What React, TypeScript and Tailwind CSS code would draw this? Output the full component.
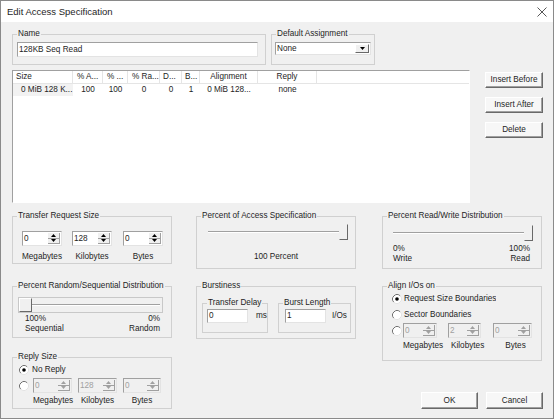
import React from 'react'

const Arrow = ({ down, disabled }: { down?: boolean; disabled?: boolean }) => (
  <svg width="5" height="3" viewBox="0 0 5 3">
    <path d={down ? 'M0 0 L5 0 L2.5 3 Z' : 'M0 3 L5 3 L2.5 0 Z'} fill={disabled ? '#a0a0a0' : '#000'} />
  </svg>
)

const Radio = ({ checked }: { checked?: boolean }) => (
  <svg width="10" height="10" viewBox="0 0 10 10" className="shrink-0">
    <circle cx="5" cy="5" r="4.5" fill="#fff" />
    <path d="M1.82 8.18 A4.5 4.5 0 0 1 8.18 1.82" fill="none" stroke="#707070" strokeWidth="1" />
    <path d="M8.18 1.82 A4.5 4.5 0 0 1 1.82 8.18" fill="none" stroke="#e3e3e3" strokeWidth="1" />
    {checked && <circle cx="5" cy="5" r="1.8" fill="#000" />}
  </svg>
)

const Group = ({ label, className, children }: { label: string; className: string; children?: React.ReactNode }) => (
  <fieldset className={`border border-[#d0d0d0] ${className}`}>
    <legend className="ml-[4px] px-[1px] leading-[10px]">{label}</legend>
    {children}
  </fieldset>
)

const Spin = ({ value, w, disabled }: { value: string; w: string; disabled?: boolean }) => (
  <div
    className={`flex h-[15px] ${w} border border-t-[#a0a0a0] border-l-[#a0a0a0] border-r-[#e3e3e3] border-b-[#e3e3e3] ${
      disabled ? 'bg-[#f0f0f0] text-[#a0a0a0]' : 'bg-white'
    }`}
  >
    <span className="flex-1 pl-[1px] leading-[13px]">{value}</span>
    <div className="my-[1px] mr-[1px] flex w-[12px] flex-col">
      <div className="flex flex-1 items-center justify-center border-r border-b border-[#a0a0a0] bg-[#f0f0f0]">
        <Arrow disabled={disabled} />
      </div>
      <div className="flex flex-1 items-center justify-center border-r border-b border-[#a0a0a0] bg-[#f0f0f0]">
        <Arrow down disabled={disabled} />
      </div>
    </div>
  </div>
)

const Btn = ({ label, w, h }: { label: string; w: string; h: string }) => (
  <div
    className={`flex ${w} ${h} items-center justify-center border border-t-white border-l-white border-r-[#696969] border-b-[#696969] bg-[#f7f7f7] shadow-[inset_-1px_-1px_0_#a0a0a0]`}
  >
    {label}
  </div>
)

const Track = ({ w }: { w: string }) => (
  <div className={`h-[2px] ${w} border-t border-t-[#a0a0a0] border-b border-b-white`} />
)

const Thumb = () => (
  <div className="-ml-[1px] h-[16px] w-[9px] border border-t-[#f0f0f0] border-l-[#f0f0f0] border-r-[#696969] border-b-[#696969]" />
)

const columns = [
  { head: 'Size', cell: '0 MiB 128 K...', w: 'w-[60px]', hAlign: 'pl-[3px]', cAlign: 'pl-[8px] bg-[#f2f2f2]' },
  { head: '% A...', cell: '100', w: 'w-[30px]', hAlign: 'pl-[4px]', cAlign: 'text-center' },
  { head: '% ...', cell: '100', w: 'w-[25px]', hAlign: 'pl-[4px]', cAlign: 'text-center' },
  { head: '% Ra...', cell: '0', w: 'w-[32px]', hAlign: 'pl-[4px]', cAlign: 'text-center' },
  { head: 'D...', cell: '0', w: 'w-[22px]', hAlign: 'pl-[3px]', cAlign: 'text-center' },
  { head: 'B...', cell: '1', w: 'w-[18px]', hAlign: 'pl-[3px]', cAlign: 'text-center' },
  { head: 'Alignment', cell: '0 MiB 128...', w: 'w-[58px]', hAlign: 'text-center', cAlign: 'text-center' },
  { head: 'Reply', cell: 'none', w: 'w-[59px]', hAlign: 'text-center', cAlign: 'text-center' }
]

export default function App() {
  return (
    <div className="flex h-[419px] w-[554px] flex-col overflow-hidden border border-[#8a8a8a] bg-[#f0f0f0] font-['Liberation_Sans',Arial,sans-serif] text-[8.2px] leading-[10px] text-[#1e1e1e]">
      {/* Title bar */}
      <div className="flex h-[21px] shrink-0 items-center justify-between bg-white pr-[6px] pl-[6px] text-[9.5px]">
        <span>Edit Access Specification</span>
        <svg width="10" height="10" viewBox="0 0 10 10">
          <path d="M0.5 0.5 L9.5 9.5 M9.5 0.5 L0.5 9.5" stroke="#444" strokeWidth="0.9" />
        </svg>
      </div>

      <div className="flex flex-1 flex-col pl-[11px]">
        {/* Name / Default Assignment */}
        <div className="mt-[7px] flex">
          <Group label="Name" className="h-[36px] w-[254px]">
            <div className="mt-[3px] ml-[4px] h-[15px] w-[241px] border border-t-[#a0a0a0] border-l-[#a0a0a0] border-r-[#e3e3e3] border-b-[#e3e3e3] bg-white pl-[1px] leading-[13px]">
              128KB Seq Read
            </div>
          </Group>
          <Group label="Default Assignment" className="ml-[5px] h-[36px] w-[104px]">
            <div className="mt-[3px] ml-[3px] flex h-[13px] w-[96px] border border-t-[#a0a0a0] border-l-[#a0a0a0] border-r-[#e3e3e3] border-b-[#e3e3e3] bg-white">
              <span className="flex-1 pl-[1px] leading-[11px]">None</span>
              <div className="my-[1px] mr-[1px] flex w-[14px] items-center justify-center border border-t-white border-l-white border-r-[#696969] border-b-[#696969] bg-[#f0f0f0]">
                <Arrow down />
              </div>
            </div>
          </Group>
        </div>

        {/* List + side buttons */}
        <div className="mt-[5px] flex">
          <div className="h-[133px] w-[458px] border border-t-[#a0a0a0] border-l-[#a0a0a0] border-r-white border-b-white bg-white">
            <div className="flex h-[13px] border-b border-[#e5e5e5]">
              {columns.map((c) => (
                <div key={c.head} className={`${c.w} ${c.hAlign} shrink-0 border-r border-[#e5e5e5] leading-[12px] whitespace-nowrap`}>
                  {c.head}
                </div>
              ))}
            </div>
            <div className="flex h-[12px]">
              {columns.map((c) => (
                <div key={c.head} className={`${c.w} ${c.cAlign} shrink-0 leading-[12px] whitespace-nowrap`}>
                  {c.cell}
                </div>
              ))}
            </div>
          </div>
          <div className="mt-[2px] ml-[15px] flex flex-col gap-[9px]">
            <Btn label="Insert Before" w="w-[58px]" h="h-[16px]" />
            <Btn label="Insert After" w="w-[58px]" h="h-[16px]" />
            <Btn label="Delete" w="w-[58px]" h="h-[16px]" />
          </div>
        </div>

        {/* Lower panels */}
        <div className="mt-[8px] flex items-start">
          {/* Column 1 */}
          <div className="flex w-[160px] flex-col">
            <Group label="Transfer Request Size" className="h-[53px] w-[160px]">
              <div className="mt-[10px] flex pl-[9px]">
                <div className="flex w-[40px] flex-col items-center">
                  <Spin value="0" w="w-[40px]" />
                  <span className="mt-[6px] whitespace-nowrap">Megabytes</span>
                </div>
                <div className="ml-[10px] flex w-[40px] flex-col items-center">
                  <Spin value="128" w="w-[40px]" />
                  <span className="mt-[6px] whitespace-nowrap">Kilobytes</span>
                </div>
                <div className="ml-[11px] flex w-[40px] flex-col items-center">
                  <Spin value="0" w="w-[40px]" />
                  <span className="mt-[6px] whitespace-nowrap">Bytes</span>
                </div>
              </div>
            </Group>

            <Group label="Percent Random/Sequential Distribution" className="mt-[17px] h-[57px] w-[160px]">
              <div className="mt-[6px] ml-[5px] flex h-[16px] w-[145px] items-center border border-[#c8c8c8]">
                <div className="h-[14px] w-[13px] border border-t-white border-l-white border-r-[#696969] border-b-[#696969] bg-[#f0f0f0]" />
                <div className="mr-[2px] h-[2px] flex-1 border-t border-t-[#a0a0a0] border-b border-b-white" />
              </div>
              <div className="mt-[1px] flex justify-between pr-[11px] pl-[12px]">
                <div>
                  100%
                  <br />
                  Sequential
                </div>
                <div className="text-right">
                  0%
                  <br />
                  Random
                </div>
              </div>
            </Group>

            <Group label="Reply Size" className="mt-[14px] h-[57px] w-[160px]">
              <div className="mt-[3px] flex h-[10px] items-center pl-[6px]">
                <Radio checked />
                <span className="ml-[3px]">No Reply</span>
              </div>
              <div className="mt-[3px] flex items-center pl-[6px]">
                <Radio />
                <div className="ml-[4px] flex gap-[6px]">
                  <Spin value="0" w="w-[39px]" disabled />
                  <Spin value="128" w="w-[39px]" disabled />
                  <Spin value="0" w="w-[38px]" disabled />
                </div>
              </div>
              <div className="mt-[3px] flex gap-[6px] pl-[20px]">
                <span className="w-[39px] text-center whitespace-nowrap">Megabytes</span>
                <span className="w-[39px] text-center whitespace-nowrap">Kilobytes</span>
                <span className="w-[38px] text-center whitespace-nowrap">Bytes</span>
              </div>
            </Group>
          </div>

          {/* Column 2 */}
          <div className="ml-[24px] flex w-[160px] flex-col">
            <Group label="Percent of Access Specification" className="h-[58px] w-[160px]">
              <div className="mt-[3px] flex h-[16px] items-center pl-[11px]">
                <Track w="w-[132px]" />
                <Thumb />
              </div>
              <div className="mt-[12px] text-center">100 Percent</div>
            </Group>

            <Group label="Burstiness" className="mt-[12px] h-[58px] w-[160px]">
              <div className="mt-[7px] flex pl-[5px]">
                <Group label="Transfer Delay" className="h-[35px] w-[63px]">
                  <div className="mt-[1px] flex items-center">
                    <div className="ml-[4px] h-[14px] w-[41px] border border-t-[#a0a0a0] border-l-[#a0a0a0] border-r-[#e3e3e3] border-b-[#e3e3e3] bg-white pl-[1px] leading-[12px]">
                      0
                    </div>
                    <span className="ml-[8px]">ms</span>
                  </div>
                </Group>
                <Group label="Burst Length" className="ml-[10px] h-[35px] w-[73px]">
                  <div className="mt-[1px] flex items-center">
                    <div className="ml-[6px] h-[14px] w-[41px] border border-t-[#a0a0a0] border-l-[#a0a0a0] border-r-[#e3e3e3] border-b-[#e3e3e3] bg-white pl-[1px] leading-[12px]">
                      1
                    </div>
                    <span className="ml-[6px]">I/Os</span>
                  </div>
                </Group>
              </div>
            </Group>
          </div>

          {/* Column 3 */}
          <div className="ml-[26px] flex w-[161px] flex-col">
            <Group label="Percent Read/Write Distribution" className="h-[58px] w-[160px]">
              <div className="mt-[4px] flex h-[16px] items-center pl-[10px]">
                <Track w="w-[132px]" />
                <Thumb />
              </div>
              <div className="mt-[3px] flex justify-between pr-[11px] pl-[10px]">
                <div>
                  0%
                  <br />
                  Write
                </div>
                <div className="text-right">
                  100%
                  <br />
                  Read
                </div>
              </div>
            </Group>

            <Group label="Align I/Os on" className="mt-[12px] h-[80px] w-[160px]">
              <div className="mt-[3px] flex h-[10px] items-center pl-[9px]">
                <Radio checked />
                <span className="ml-[2px] w-[92px] overflow-hidden whitespace-nowrap">Request Size Boundaries</span>
              </div>
              <div className="mt-[6px] flex h-[10px] items-center pl-[9px]">
                <Radio />
                <span className="ml-[2px]">Sector Boundaries</span>
              </div>
              <div className="mt-[3px] flex items-center pl-[9px]">
                <Radio />
                <div className="ml-[1px] flex">
                  <Spin value="0" w="w-[34px]" disabled />
                  <div className="ml-[11px]">
                    <Spin value="2" w="w-[33px]" disabled />
                  </div>
                  <div className="ml-[12px]">
                    <Spin value="0" w="w-[39px]" disabled />
                  </div>
                </div>
              </div>
              <div className="mt-[3px] flex pl-[20px]">
                <span className="w-[37px] text-center whitespace-nowrap">Megabytes</span>
                <span className="ml-[11px] w-[33px] text-center whitespace-nowrap">Kilobytes</span>
                <span className="ml-[12px] w-[39px] text-center whitespace-nowrap">Bytes</span>
              </div>
            </Group>

            <div className="mt-[31px] flex justify-end gap-[8px]">
              <Btn label="OK" w="w-[57px]" h="h-[17px]" />
              <Btn label="Cancel" w="w-[57px]" h="h-[17px]" />
            </div>
          </div>
        </div>
      </div>
    </div>
  )
}
